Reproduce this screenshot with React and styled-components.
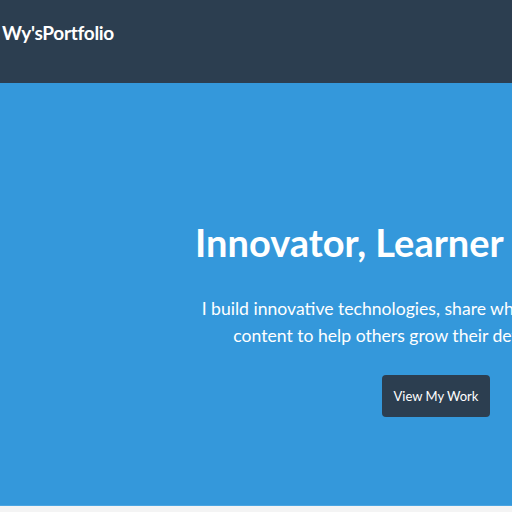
import styled, { createGlobalStyle } from 'styled-components'

const GlobalStyle = createGlobalStyle`
  html, body {
    margin: 0;
    padding: 0;
    overflow: hidden;
    background: #f4f4f4;
  }
  body {
    font-family: Lato, 'Open Sans', sans-serif;
  }
`

const Page = styled.div`
  width: 872px;
`

const Header = styled.header`
  background-color: #2c3e50;
  height: 83px;
  padding: 0 2px;
  box-sizing: border-box;
  display: flex;
  align-items: flex-start;
`

const Logo = styled.div`
  margin-top: 21px;
  color: #fff;
  font-size: 19px;
  font-weight: 700;
  letter-spacing: -0.3px;
`

const Hero = styled.section`
  background-color: #3498db;
  height: 423px;
  border-bottom: 1px solid #4aa5e2;
  display: flex;
  flex-direction: column;
  align-items: center;
  text-align: center;
  color: #fff;
  padding-top: 137px;
  box-sizing: border-box;
`

const Title = styled.h1`
  margin: 0;
  font-size: 38px;
  font-weight: 700;
  line-height: 1.2;
`

const Subtitle = styled.p`
  margin: 29px 0 0;
  font-size: 17.6px;
  line-height: 27px;
`

const Button = styled.a`
  margin-top: 26px;
  display: inline-block;
  background-color: #2c3e50;
  color: #fff;
  padding: 13px 12px;
  border-radius: 4px;
  font-size: 13px;
  line-height: 16px;
  text-decoration: none;
`

export default function App() {
  return (
    <>
      <GlobalStyle />
      <Page>
        <Header>
          <Logo>Wy'sPortfolio</Logo>
        </Header>
        <Hero>
          <Title>Innovator, Learner &amp; Creator</Title>
          <Subtitle>
            I build innovative technologies, share what I learn, and create
            <br />
            content to help others grow their development skills.
          </Subtitle>
          <Button href="#work">View My Work</Button>
        </Hero>
      </Page>
    </>
  )
}
